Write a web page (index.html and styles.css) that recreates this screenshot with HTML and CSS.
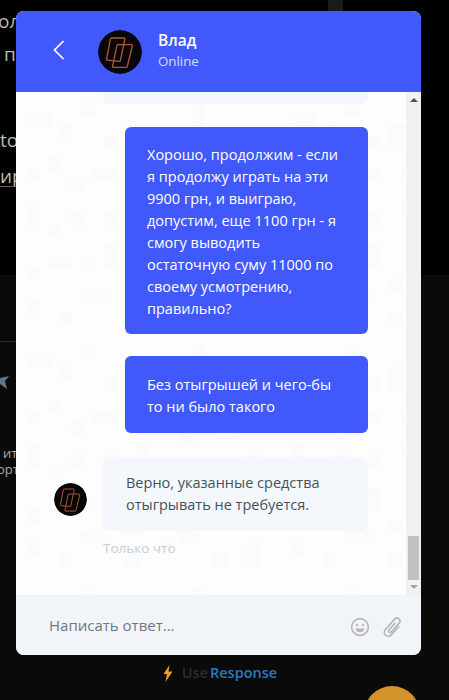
FILE: index.html
```html
<!DOCTYPE html>
<html lang="ru">
<head>
<meta charset="utf-8">
<title>Чат</title>
<link rel="stylesheet" href="styles.css">
</head>
<body>
<div class="backdrop">
  <div class="top-band"></div>
  <div class="rule"></div>
  <div class="tab"></div>
  <span class="bg-text t1">ол</span>
  <span class="bg-text t2">п</span>
  <span class="bg-text t3">to</span>
  <span class="bg-text t4">ир</span>
  <div class="underline"></div>
  <svg class="bg-star" width="9" height="16" viewBox="0 0 9 16"><path d="M0 5 L9 3 L5 8 L7 16 L0 11 Z" fill="#5f7486"/></svg>
  <span class="bg-small s1">ит</span>
  <span class="bg-small s2">орт</span>
  <div class="orange"></div>
</div>

<main class="chat">
  <header class="chat-head">
    <svg class="back" width="12" height="20" viewBox="0 0 12 20"><path d="M10.500 1 L1.500 10 L10.500 19" fill="none" stroke="#fff" stroke-width="1.700"/></svg>
    <svg class="avatar big" viewBox="0 0 44 44"><use href="#logo"/></svg>
    <div class="who">
      <div class="name">Влад</div>
      <div class="status">Online</div>
    </div>
  </header>

  <div class="body">
    <section class="messages">
      <div class="stub"></div>
      <div class="bubble out first">Хорошо, продолжим - если я продолжу играть на эти 9900 грн, и выиграю, допустим, еще 1100 грн - я смогу выводить остаточную суму 11000 по своему усмотрению, правильно?</div>
      <div class="bubble out second">Без отыгрышей и чего-бы то ни было такого</div>
      <div class="incoming">
        <svg class="avatar small" viewBox="0 0 44 44"><use href="#logo"/></svg>
        <div class="bubble in">Верно, указанные средства отыгрывать не требуется.</div>
      </div>
      <div class="time">Только что</div>
    </section>
    <div class="scrollbar">
      <span class="arrow up"></span>
      <span class="thumb"></span>
      <span class="arrow down"></span>
    </div>
  </div>

  <footer class="composer">
    <span class="placeholder">Написать ответ...</span>
    <svg class="icon" width="20" height="20" viewBox="0 0 20 20" fill="none" stroke="#b4b6b8" stroke-width="1.600"><circle cx="10" cy="10" r="8.400"/><circle cx="7" cy="8" r="1.200" fill="#b4b6b8" stroke="none"/><circle cx="13" cy="8" r="1.200" fill="#b4b6b8" stroke="none"/><path d="M5.500 11.500 H14.500 C14 14 12.200 15.200 10 15.200 C7.800 15.200 6 14 5.500 11.500 Z" fill="#b4b6b8" stroke="none"/></svg>
    <svg class="icon" width="24" height="24" viewBox="0 0 24 24" fill="none" stroke="#b4b6b8" stroke-width="1.600" stroke-linecap="round"><path transform="rotate(42 12 12)" d="M11 8 V17 A1.500 1.500 0 0 0 14 17 V5 A3 3 0 0 0 8 5 V19 A4 4 0 0 0 16 19 V8"/></svg>
  </footer>
</main>

<div class="brand">
  <svg width="10" height="17" viewBox="0 0 10 17"><path d="M6.500 0 L0.500 9 H4 L2.500 17 L9.500 6.500 H5.500 Z" fill="#f0a01c"/></svg>
  <span class="use">Use</span><span class="resp">Response</span>
</div>

<svg class="defs" width="0" height="0">
  <defs>
    <g id="logo">
      <circle cx="22" cy="22" r="22" fill="#080606"/>
      <g fill="none" stroke="#a85c38" stroke-width="1.300" stroke-linejoin="round">
        <path d="M13.500 8 H26 Q27.200 8 26.900 9.200 L22.400 30.500 Q22.200 31.400 21 31.300 L9.600 30.200 Q8.300 30 8.600 28.800 L12.400 9 Q12.600 8 13.500 8 Z"/>
        <path d="M20 14.700 H33.300 Q34.600 14.700 34.300 16 L29.300 36.400 Q29 37.400 28 37.400 H15.600 Q14.300 37.400 14.600 36.100 L18.900 15.700 Q19.100 14.700 20 14.700 Z"/>
      </g>
    </g>
  </defs>
</svg>
</body>
</html>
```

FILE: styles.css
```css
* { box-sizing: border-box; }
html, body { margin: 0; height: 100%; }
body {
  width: 449px;
  height: 700px;
  overflow: hidden;
  background: #0a0a0a;
  font-family: "Open Sans", "Noto Sans", sans-serif;
  position: relative;
  padding: 11px 28px 0 16px;
}
.backdrop { position: absolute; inset: 0; overflow: hidden; }
.top-band { position: absolute; left: 0; top: 0; width: 449px; height: 275px; background: #000; }
.rule { position: absolute; left: 0; top: 341px; width: 16px; height: 1px; background: #2a2a2a; }
.tab { position: absolute; left: 328px; top: 0; width: 15px; height: 11px; background: #1a1a1a; }
.underline { position: absolute; left: 0; top: 186px; width: 16px; height: 1px; background: #666; }
.bg-text { position: absolute; color: #b8b8b8; font-size: 19px; line-height: 24px; white-space: nowrap; }
.t1 { left: -2px; top: 9px; }
.t2 { left: 4px; top: 42px; }
.t3 { left: 0; top: 128px; }
.t4 { left: 0; top: 164px; }
.bg-star { position: absolute; left: 0; top: 373px; }
.bg-small { position: absolute; color: #a8a8a8; font-size: 13px; line-height: 15px; white-space: nowrap; }
.s1 { left: 3px; top: 446px; }
.s2 { left: -3px; top: 462px; }
.orange { position: absolute; left: 364px; top: 686px; width: 56px; height: 56px; border-radius: 50%; background: #d4922a; }

.chat {
  position: relative;
  width: 405px;
  height: 644px;
  border-radius: 8px;
  overflow: hidden;
  display: flex;
  flex-direction: column;
  background: #fff;
}
.chat-head {
  flex: none;
  height: 81px;
  background: #4159fb;
  display: flex;
  align-items: center;
  padding: 0 0 0 37px;
  color: #fff;
}
.back { flex: none; margin: -3px 33px 0 0; }
.avatar { display: block; flex: none; border-radius: 50%; }
.avatar.big { width: 44px; height: 44px; }
.who { margin-left: 16px; margin-top: -3px; }
.name { font-size: 15.500px; font-weight: 600; line-height: 22px; }
.status { font-size: 13.300px; line-height: 20px; color: #d6dcff; }

.body { flex: none; height: 503px; display: flex; }
.messages {
  flex: 1;
  min-width: 0;
  overflow: hidden;
  padding-left: 38px;
  background-color: #fdfdfd;
  background-image: url("data:image/svg+xml,%3Csvg xmlns='http://www.w3.org/2000/svg' width='264' height='242'%3E%3Cg fill='%23fbfbfb' stroke='%23f9f9f9'%3E%3Crect x='11.500' y='22.500' width='22' height='11'/%3E%3Crect x='66.500' y='11.500' width='11' height='11'/%3E%3Crect x='110.500' y='33.500' width='22' height='22'/%3E%3Crect x='176.500' y='11.500' width='11' height='22'/%3E%3Crect x='220.500' y='44.500' width='11' height='11'/%3E%3Crect x='33.500' y='66.500' width='11' height='11'/%3E%3Crect x='77.500' y='77.500' width='22' height='11'/%3E%3Crect x='143.500' y='66.500' width='11' height='11'/%3E%3Crect x='198.500' y='88.500' width='22' height='11'/%3E%3Crect x='11.500' y='110.500' width='11' height='22'/%3E%3Crect x='55.500' y='121.500' width='11' height='11'/%3E%3Crect x='121.500' y='110.500' width='11' height='11'/%3E%3Crect x='165.500' y='132.500' width='22' height='22'/%3E%3Crect x='231.500' y='121.500' width='11' height='11'/%3E%3Crect x='33.500' y='165.500' width='22' height='11'/%3E%3Crect x='88.500' y='154.500' width='11' height='22'/%3E%3Crect x='132.500' y='176.500' width='11' height='11'/%3E%3Crect x='209.500' y='165.500' width='22' height='11'/%3E%3Crect x='11.500' y='209.500' width='11' height='11'/%3E%3Crect x='66.500' y='198.500' width='22' height='11'/%3E%3Crect x='110.500' y='220.500' width='11' height='11'/%3E%3Crect x='165.500' y='198.500' width='11' height='11'/%3E%3Crect x='231.500' y='209.500' width='11' height='22'/%3E%3Crect x='44.500' y='33.500' width='11' height='11'/%3E%3Crect x='88.500' y='44.500' width='11' height='11'/%3E%3Crect x='154.500' y='33.500' width='11' height='11'/%3E%3Crect x='198.500' y='55.500' width='11' height='11'/%3E%3Crect x='11.500' y='77.500' width='11' height='11'/%3E%3Crect x='55.500' y='88.500' width='11' height='11'/%3E%3Crect x='121.500' y='77.500' width='11' height='11'/%3E%3Crect x='165.500' y='99.500' width='11' height='11'/%3E%3Crect x='242.500' y='77.500' width='11' height='11'/%3E%3Crect x='33.500' y='132.500' width='11' height='11'/%3E%3Crect x='88.500' y='121.500' width='11' height='11'/%3E%3Crect x='143.500' y='143.500' width='11' height='11'/%3E%3Crect x='209.500' y='132.500' width='11' height='11'/%3E%3Crect x='11.500' y='176.500' width='11' height='11'/%3E%3Crect x='66.500' y='165.500' width='11' height='11'/%3E%3Crect x='110.500' y='187.500' width='11' height='11'/%3E%3Crect x='187.500' y='176.500' width='11' height='11'/%3E%3Crect x='44.500' y='220.500' width='11' height='11'/%3E%3Crect x='143.500' y='209.500' width='11' height='11'/%3E%3Crect x='198.500' y='220.500' width='11' height='11'/%3E%3C/g%3E%3C/svg%3E");
  background-size: 264px 242px;
}
.stub {
  width: 265px;
  height: 12px;
  margin-left: 49px;
  background: #f4f7fb;
  border-radius: 0 0 6px 6px;
}
.bubble {
  border-radius: 6px;
  font-size: 14.500px;
  line-height: 22px;
}
.out {
  width: 243px;
  margin-left: 71px;
  background: #4159fb;
  color: #fff;
  padding-left: 22px;
  padding-right: 26px;
}
.first { margin-top: 23px; padding-top: 17px; padding-bottom: 14px; }
.second { margin-top: 22px; padding-top: 18px; padding-bottom: 15px; }
.incoming { display: flex; align-items: flex-end; margin-top: 24px; }
.avatar.small { width: 33px; height: 33px; margin-bottom: 15px; }
.in {
  width: 265px;
  margin-left: 16px;
  background: #f4f7fb;
  color: #45515c;
  padding: 15px 20px 15px 23px;
}
.time { margin: 8px 0 0 49px; font-size: 13.500px; line-height: 18px; color: #c4ced9; }

.scrollbar {
  flex: none;
  width: 15px;
  background: #f1f1f1;
  display: flex;
  flex-direction: column;
  align-items: center;
  padding: 6px 0 6px;
}
.arrow { flex: none; width: 0; height: 0; border-left: 4px solid transparent; border-right: 4px solid transparent; }
.arrow.up { border-bottom: 4px solid #505050; }
.arrow.down { border-top: 4px solid #a3a3a3; }
.thumb { width: 11px; height: 44px; background: #c1c1c1; margin-top: auto; margin-bottom: 5px; }

.composer {
  flex: 1;
  background: #f1f5f9;
  display: flex;
  align-items: center;
  padding: 3px 16px 0 33px;
  gap: 11px;
}
.placeholder { flex: 1; font-size: 15px; color: #6e7780; margin-top: -3px; }
.icon { display: block; flex: none; }

.brand {
  width: 405px;
  margin-top: 8px;
  padding-left: 3px;
  display: flex;
  align-items: center;
  justify-content: center;
  font-size: 14.500px;
  font-weight: 600;
  line-height: 20px;
}
.brand svg { margin-right: 9px; }
.use { color: #2b2f33; margin-right: 2px; }
.resp { color: #2a79c4; }
.defs { position: absolute; }
```
